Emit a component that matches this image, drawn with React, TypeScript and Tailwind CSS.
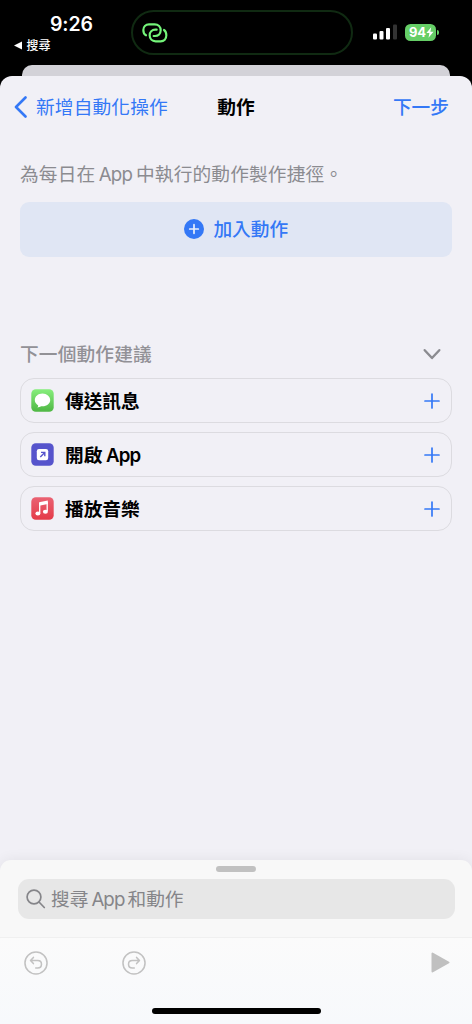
import type { ReactNode } from 'react'

function AppWord({ className }: { className: string }) {
    return <span className={className}>App</span>
}

function StatusBar() {
    return (
        <div className="flex h-[65px] items-start text-white">
            <div className="w-[131px] shrink-0">
                <div className="ml-[50px] mt-[12px] h-[24px] text-[19.5px] leading-[24px] font-semibold tracking-[-0.1px]">9:26</div>
                <div className="ml-[14px] mt-[1px] flex h-[16px] items-center">
                    <svg width="8" height="9" viewBox="0 0 8 9"><path d="M0 4.5 8 .6v7.8Z" fill="#fff" /></svg>
                    <span className="ml-[4.5px] mt-[2px] text-[12px] leading-[16px] font-medium">搜尋</span>
                </div>
            </div>
            <div className="mt-[10px] flex h-[45px] w-[222px] shrink-0 items-center rounded-full border-2 border-[#102a12] pl-[9px]">
                <svg width="26" height="20" viewBox="426 68 78 60" fill="none" stroke="#74f57a" strokeWidth="6.5" strokeLinecap="round">
                    <path d="M438 105C432 102 430 96 430 89C430 79 437 72 447 72H464C475 72 482 80 482 90C482 100 475 107 465 107H461" />
                    <path d="M492 89C497 92 499 98 499 105C499 116 492 123 482 123H467C456 123 449 115 449 105C449 95 456 88 466 88H470" />
                </svg>
            </div>
            <div className="mt-[23px] ml-[20px] flex h-[18px] items-center">
                <svg width="24" height="16" viewBox="0 0 24 16" fill="#fff">
                    <rect x="0" y="9.5" width="4" height="6" rx="1.1" />
                    <rect x="6.5" y="7" width="4" height="8.5" rx="1.1" />
                    <rect x="13" y="4" width="4" height="11.5" rx="1.1" />
                    <rect x="20" y=".5" width="4" height="15" rx="1.1" fill="#333" />
                </svg>
                <div className="ml-[8px] flex h-[17px] w-[31px] items-center rounded-[5.5px] bg-[#65ce66] pl-[4px]">
                    <span className="text-[13px] leading-[17px] font-bold tracking-[-0.3px]">94</span>
                    <svg className="ml-[0.5px]" width="8" height="11" viewBox="0 0 8 11"><path d="M5.2.3.4 6h3L2.5 10.7 7.5 4.8H4.4Z" fill="#fff" /></svg>
                </div>
                <div className="ml-[1px] h-[5px] w-[2px] rounded-r-full bg-[#65ce66]" />
            </div>
        </div>
    )
}

function ActionRow({ icon, children }: { icon: ReactNode, children: ReactNode }) {
    return (
        <div className="flex h-[45px] items-center rounded-[14px] border border-[#dcdbe0] pl-[10px] pr-[11px]">
            {icon}
            <div className="ml-[11px] mt-[2px] flex-1 text-[18.7px] leading-[28px] font-bold text-black">{children}</div>
            <svg width="16" height="16" viewBox="0 0 16 16" stroke="#3478f6" strokeWidth="1.7" strokeLinecap="round"><path d="M8 1v14M1 8h14" /></svg>
        </div>
    )
}

function MessagesIcon() {
    return (
        <svg width="23" height="23" viewBox="0 0 23 23">
            <defs>
                <linearGradient id="messages" x1="0" y1="0" x2="0" y2="1">
                    <stop offset="0" stopColor="#86ee7c" />
                    <stop offset="1" stopColor="#4fb744" />
                </linearGradient>
            </defs>
            <rect x=".3" y=".3" width="22.4" height="22.4" rx="4.5" fill="url(#messages)" />
            <path d="M11.5 4.5c-4.3 0-7.7 2.9-7.7 6.5 0 2.3 1.3 4.2 3.4 5.4 0 .9-.5 1.600-1 2 1.600 0 2.900-.5 3.800-1.200.5.1 1 .1 1.500.1 4.300 0 7.700-2.800 7.700-6.300s-3.400-6.500-7.700-6.500Z" fill="#fff" />
        </svg>
    )
}

function OpenAppIcon() {
    return (
        <svg width="23" height="23" viewBox="0 0 23 23">
            <rect x=".3" y=".3" width="22.4" height="22.4" rx="4.5" fill="#5654cc" />
            <rect x="5.8" y="6" width="11.4" height="11.2" rx="2.2" fill="#fff" />
            <path d="M9.300 13.900 13.500 9.700M10 9.400h3.800v3.800" fill="none" stroke="#5654cc" strokeWidth="1.4" />
        </svg>
    )
}

function MusicIcon() {
    return (
        <svg width="23" height="23" viewBox="0 0 23 23">
            <defs>
                <linearGradient id="music" x1="0" y1="0" x2="0" y2="1">
                    <stop offset="0" stopColor="#ea6273" />
                    <stop offset="1" stopColor="#e43b48" />
                </linearGradient>
            </defs>
            <rect x=".3" y=".3" width="22.4" height="22.4" rx="4.5" fill="url(#music)" />
            <path d="M8.100 5.300 16.800 3.500V7L8.100 8.800Z" fill="#fff" />
            <path d="M8.700 6v10M16.200 5v9" stroke="#fff" strokeWidth="1.300" />
            <ellipse cx="6.900" cy="16.500" rx="2.500" ry="2" fill="#fff" />
            <ellipse cx="14.400" cy="14.800" rx="2.500" ry="2" fill="#fff" />
        </svg>
    )
}

function Undo({ className }: { className?: string }) {
    return (
        <svg className={className} width="24" height="24" viewBox="0 0 25 25" fill="none" stroke="#c2c2c2" strokeWidth="1.6" strokeLinecap="round" strokeLinejoin="round">
            <circle cx="12.500" cy="12.500" r="11.500" />
            <path d="M9.800 6.700 6.800 9.900l3 3.200M7 9.900h7.200c2.300 0 4 1.500 4 3.800s-1.700 3.900-4 3.900h-2" />
        </svg>
    )
}

export default function App() {
    return (
        <div className="flex h-[1024px] w-[472px] flex-col overflow-hidden bg-black font-[Inter,'Noto_Sans_CJK_TC',sans-serif] whitespace-nowrap">
            <StatusBar />
            <div className="mx-[22px] h-[11px] shrink-0 rounded-t-[10px] bg-[#d3d2d8]" />
            <div className="flex flex-1 flex-col rounded-t-[12px] bg-[#f1f0f6]">
                <div className="grid h-[62px] grid-cols-[1fr_auto_1fr] items-center pl-[14px] pr-[23px] text-[18.7px] leading-[28px] text-[#3478f6]">
                    <div className="flex items-center">
                        <svg width="14" height="22" viewBox="0 0 14 22" fill="none" stroke="#3478f6" strokeWidth="2.6" strokeLinecap="round" strokeLinejoin="round"><path d="M11.500 1.500 2 11l9.500 9.500" /></svg>
                        <span className="ml-[8px] mt-[2px] tracking-[0.15px]">新增自動化操作</span>
                    </div>
                    <span className="ml-[9px] mt-[2px] font-bold text-black">動作</span>
                    <span className="mt-[2px] text-right font-medium">下一步</span>
                </div>

                <div className="px-[20px]">
                    <p className="mt-[23px] h-[28px] text-[18.7px] leading-[28px] tracking-[0.15px] text-[#8b8b90]">
                        為每日在<AppWord className="ml-[3.5px] mr-[4px] tracking-[-0.9px]" />中執行的動作製作捷徑。
                    </p>
                    <div className="mt-[12.5px] flex h-[55.5px] items-center justify-center rounded-[9px] bg-[#e0e6f4] text-[#3478f6]">
                        <svg width="20" height="20" viewBox="0 0 20 20"><circle cx="10" cy="10" r="10" fill="#3478f6" /><path d="M10 5.700v8.600M5.700 10h8.600" stroke="#e9effb" strokeWidth="1.7" strokeLinecap="round" /></svg>
                        <span className="ml-[9.500px] mt-[2px] text-[18.7px] leading-[28px] font-medium">加入動作</span>
                    </div>

                    <div className="mt-[83px] flex h-[28px] items-center justify-between pr-[11px] text-[#929196]">
                        <span className="mt-[2px] text-[18.7px] leading-[28px] font-medium tracking-[0.15px]">下一個動作建議</span>
                        <svg width="18" height="12" viewBox="0 0 18 12" fill="none" stroke="#8b8b90" strokeWidth="2.4" strokeLinecap="round" strokeLinejoin="round"><path d="M1.700 2.200 9 10 16.300 2.200" /></svg>
                    </div>
                    <div className="mt-[10px] flex flex-col gap-[9px]">
                        <ActionRow icon={<MessagesIcon />}>傳送訊息</ActionRow>
                        <ActionRow icon={<OpenAppIcon />}>開啟<AppWord className="ml-[3.500px] font-semibold tracking-[-0.8px]" /></ActionRow>
                        <ActionRow icon={<MusicIcon />}>播放音樂</ActionRow>
                    </div>
                </div>

                <div className="mt-auto h-[164px] rounded-t-[11px] bg-[#f8f8f8] shadow-[0_0_14px_rgba(0,0,0,0.07)]">
                    <div className="mx-auto mt-[6px] h-[6px] w-[40px] rounded-full bg-[#c1c1c1]" />
                    <div className="ml-[18px] mr-[17px] mt-[7px] flex h-[40px] items-center rounded-[11px] bg-[#e7e7e7] pl-[8px] text-[#858589]">
                        <svg width="20" height="20" viewBox="0 0 20 20" fill="none" stroke="#858589" strokeWidth="1.7" strokeLinecap="round"><circle cx="8" cy="8" r="6.900" /><path d="m13 13 5.300 5.500" /></svg>
                        <span className="ml-[5px] mt-[2px] text-[18.7px] leading-[28px]">搜尋<AppWord className="mx-[3px] tracking-[-0.9px]" />和動作</span>
                    </div>
                    <div className="mt-[18px] flex h-[87px] flex-col border-t border-[#f0f0f0] bg-linear-to-b from-[#fbfbfb] to-[#f7f9fc]">
                        <div className="mt-[12px] flex h-[25px] items-center pl-[24px] pr-[22px]">
                            <Undo />
                            <Undo className="ml-[74px] -scale-x-100" />
                            <svg className="ml-auto" width="19" height="21" viewBox="0 0 19 21"><path d="M1.500 1.500v18L17.500 10.500Z" fill="#c0c0c0" stroke="#c0c0c0" strokeWidth="2" strokeLinejoin="round" /></svg>
                        </div>
                        <div className="mx-auto mt-[33px] h-[6px] w-[169px] rounded-full bg-black" />
                    </div>
                </div>
            </div>
        </div>
    )
}
